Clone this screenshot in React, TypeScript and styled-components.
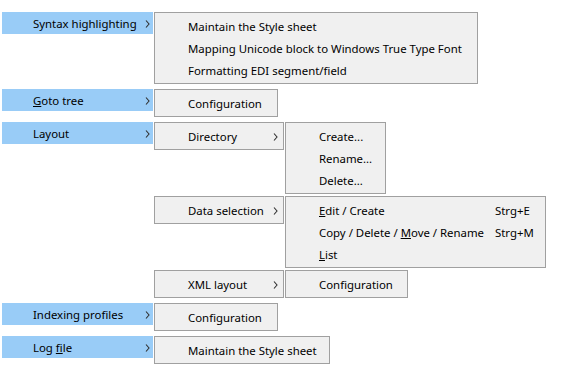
import styled, { createGlobalStyle } from 'styled-components';

const GlobalStyle = createGlobalStyle`
  html, body {
    margin: 0;
    padding: 0;
    background: #ffffff;
  }
  body {
    font-family: 'Noto Sans', 'Liberation Sans', sans-serif;
    font-size: 11.4px;
    color: #000000;
  }
`;

const Page = styled.div`
  display: flex;
  flex-direction: column;
  gap: 5px;
  padding: 12px 0 0 2px;
  width: 570px;
  height: 378px;
  box-sizing: border-box;
`;

const Group = styled.section`
  display: flex;
  align-items: flex-start;
  gap: 1px;
`;

const Bar = styled.div`
  display: flex;
  align-items: center;
  justify-content: space-between;
  width: 151px;
  height: 22px;
  box-sizing: border-box;
  padding: 1px 3px 0 31px;
  background: #99ccf7;
  white-space: nowrap;
`;

const Stack = styled.div`
  display: flex;
  flex-direction: column;
  gap: 2px;
`;

const Cascade = styled.div`
  display: flex;
  align-items: flex-start;
  gap: 1px;
`;

const Menu = styled.div<{ $width: number }>`
  display: grid;
  grid-template-columns: 1fr auto;
  width: ${(p) => p.$width}px;
  box-sizing: border-box;
  padding: 2px 0;
  border: 1px solid #a0a0a0;
  background: #f0f0f0;
`;

const Row = styled.div`
  display: contents;
`;

const Label = styled.span`
  height: 22px;
  box-sizing: border-box;
  padding: 1px 0 0 33px;
  line-height: 22px;
  white-space: nowrap;
`;

const Side = styled.span`
  display: flex;
  align-items: center;
  justify-content: flex-end;
  height: 22px;
  box-sizing: border-box;
  padding: 1px 5px 0 0;
  white-space: nowrap;
`;

const Shortcut = styled.span`
  width: 45px;
`;

const Chevron = () => (
  <svg width="5" height="8" viewBox="0 0 5 8">
    <polyline points="1,0.5 4,4 1,7.5" fill="none" stroke="#303030" strokeWidth="1.1" />
  </svg>
);

type Item = { label: React.ReactNode; shortcut?: string; sub?: boolean };

const MenuBox = ({ width, items }: { width: number; items: Item[] }) => (
  <Menu $width={width}>
    {items.map((it, i) => (
      <Row key={i}>
        <Label>{it.label}</Label>
        <Side>
          {it.shortcut !== undefined && <Shortcut>{it.shortcut}</Shortcut>}
          {it.sub && <Chevron />}
        </Side>
      </Row>
    ))}
  </Menu>
);

const App = () => {
  return (
    <>
      <GlobalStyle />
      <Page>
        <Group>
          <Bar>
            Syntax highlighting <Chevron />
          </Bar>
          <MenuBox
            width={324}
            items={[
              { label: 'Maintain the Style sheet' },
              { label: 'Mapping Unicode block to Windows True Type Font' },
              { label: 'Formatting EDI segment/field' },
            ]}
          />
        </Group>
        <Group>
          <Bar>
            <span><u>G</u>oto tree</span> <Chevron />
          </Bar>
          <MenuBox width={124} items={[{ label: 'Configuration' }]} />
        </Group>
        <Group>
          <Bar>
            Layout <Chevron />
          </Bar>
          <Stack>
            <Cascade>
              <MenuBox width={130} items={[{ label: 'Directory', sub: true }]} />
              <MenuBox
                width={101}
                items={[{ label: 'Create...' }, { label: 'Rename...' }, { label: 'Delete...' }]}
              />
            </Cascade>
            <Cascade>
              <MenuBox width={130} items={[{ label: 'Data selection', sub: true }]} />
              <MenuBox
                width={261}
                items={[
                  { label: <><u>E</u>dit / Create</>, shortcut: 'Strg+E' },
                  { label: <>Copy / Delete / <u>M</u>ove / Rename</>, shortcut: 'Strg+M' },
                  { label: <><u>L</u>ist</>, shortcut: '' },
                ]}
              />
            </Cascade>
            <Cascade>
              <MenuBox width={130} items={[{ label: 'XML layout', sub: true }]} />
              <MenuBox width={123} items={[{ label: 'Configuration' }]} />
            </Cascade>
          </Stack>
        </Group>
        <Group>
          <Bar>
            Indexing profiles <Chevron />
          </Bar>
          <MenuBox width={124} items={[{ label: 'Configuration' }]} />
        </Group>
        <Group>
          <Bar>
            <span>Log <u>f</u>ile</span> <Chevron />
          </Bar>
          <MenuBox width={176} items={[{ label: 'Maintain the Style sheet' }]} />
        </Group>
      </Page>
    </>
  );
};

export default App;
